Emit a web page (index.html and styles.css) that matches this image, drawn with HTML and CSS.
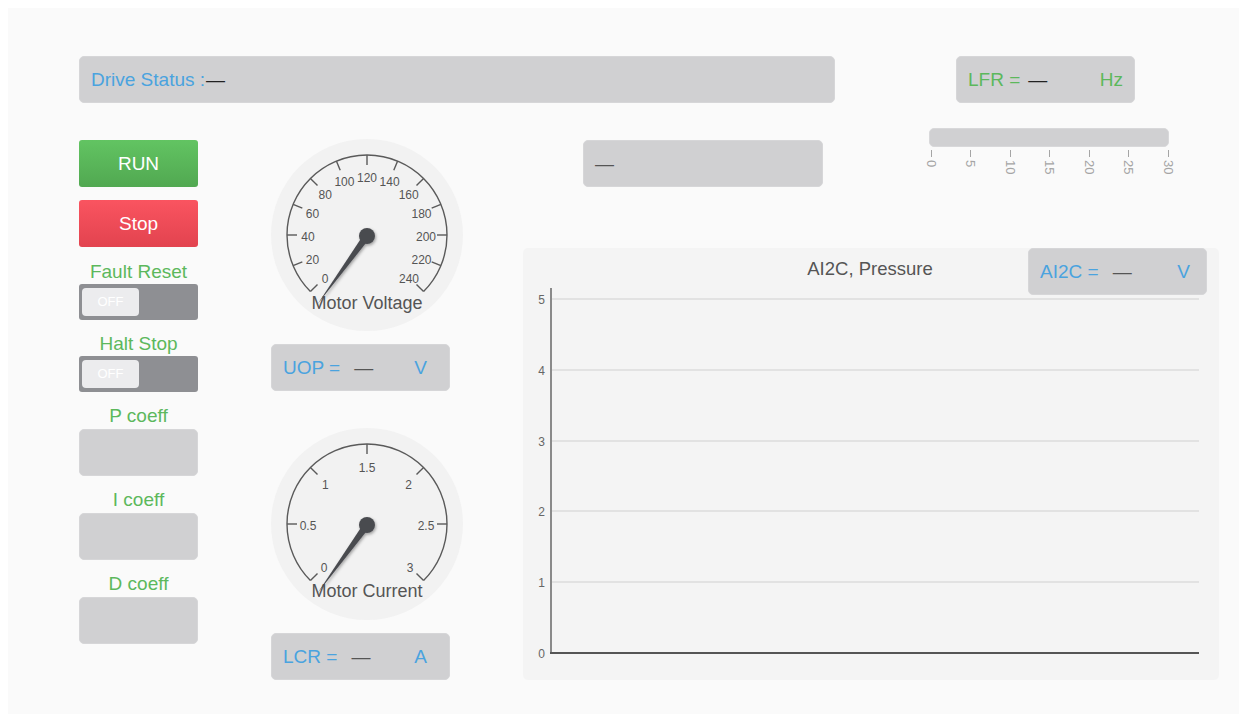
FILE: index.html
```html
<!DOCTYPE html>
<html lang="en">
<head>
<meta charset="utf-8">
<title>Drive Control</title>
<link rel="stylesheet" href="styles.css">
</head>
<body>
<div class="panel">
  <div class="top-row">
    <div class="box status"><span class="blue">Drive Status :</span><span class="dash dark">—</span></div>
    <div class="box readout lfr">
      <span class="green lbl">LFR =</span><span class="dash dark">—</span><span class="green unit">Hz</span>
    </div>
  </div>

  <div class="main">
    <div class="controls">
      <button class="btn run">RUN</button>
      <button class="btn stop">Stop</button>

      <div class="field first">
        <div class="field-label">Fault Reset</div>
        <div class="toggle"><span class="knob">OFF</span></div>
      </div>
      <div class="field">
        <div class="field-label">Halt Stop</div>
        <div class="toggle"><span class="knob">OFF</span></div>
      </div>
      <div class="field">
        <div class="field-label">P coeff</div>
        <div class="box input"></div>
      </div>
      <div class="field">
        <div class="field-label">I coeff</div>
        <div class="box input"></div>
      </div>
      <div class="field">
        <div class="field-label">D coeff</div>
        <div class="box input"></div>
      </div>
    </div>

    <div class="gauges">
      <svg class="gauge" width="192" height="192" viewBox="0 0 192 192">
        <defs>
          <filter id="needle-shadow" x="-50%" y="-50%" width="200%" height="200%">
            <feDropShadow dx="1" dy="1.5" stdDeviation="1.4" flood-color="#000" flood-opacity="0.35"/>
          </filter>
        </defs>
        <circle cx="96" cy="96" r="96" fill="#f2f2f2"/>
        <path d="M39.43 152.57 A80 80 0 1 1 152.57 152.57" fill="none" stroke="#5a5a5a" stroke-width="1.4"/>
        <g stroke="#5a5a5a" stroke-width="1.4">
          <line x1="39.43" y1="152.57" x2="46.5" y2="145.5"/>
          <line x1="22.09" y1="126.62" x2="31.33" y2="122.79"/>
          <line x1="16" y1="96" x2="26" y2="96"/>
          <line x1="22.09" y1="65.38" x2="31.33" y2="69.21"/>
          <line x1="39.43" y1="39.43" x2="46.5" y2="46.5"/>
          <line x1="65.38" y1="22.09" x2="69.21" y2="31.33"/>
          <line x1="96" y1="16" x2="96" y2="26"/>
          <line x1="126.62" y1="22.09" x2="122.79" y2="31.33"/>
          <line x1="152.57" y1="39.43" x2="145.5" y2="46.5"/>
          <line x1="169.91" y1="65.38" x2="160.67" y2="69.21"/>
          <line x1="176" y1="96" x2="166" y2="96"/>
          <line x1="169.91" y1="126.62" x2="160.67" y2="122.79"/>
          <line x1="152.57" y1="152.57" x2="145.5" y2="145.5"/>
        </g>
        <g class="dial-num">
          <text x="54" y="140">0</text>
          <text x="41.5" y="121">20</text>
          <text x="37" y="98">40</text>
          <text x="41.5" y="75">60</text>
          <text x="54.3" y="56">80</text>
          <text x="73.4" y="43">100</text>
          <text x="96" y="38.5">120</text>
          <text x="118.6" y="43">140</text>
          <text x="137.7" y="56">160</text>
          <text x="150.5" y="75">180</text>
          <text x="155" y="98">200</text>
          <text x="150.5" y="121">220</text>
          <text x="138" y="140">240</text>
        </g>
        <text class="gauge-title" x="96" y="164">Motor Voltage</text>
        <g filter="url(#needle-shadow)" fill="#4a4b50">
          <polygon points="92.4,98 99.6,98 96,13" transform="rotate(-144 96 97)"/>
          <circle cx="96" cy="97" r="8"/>
        </g>
      </svg>

      <div class="box readout uop">
        <span class="blue lbl">UOP =</span><span class="dash grey">—</span><span class="blue unit">V</span>
      </div>

      <svg class="gauge gauge-low" width="192" height="192" viewBox="0 0 192 192">
        <circle cx="96" cy="96" r="96" fill="#f2f2f2"/>
        <path d="M39.43 152.57 A80 80 0 1 1 152.57 152.57" fill="none" stroke="#5a5a5a" stroke-width="1.4"/>
        <g stroke="#5a5a5a" stroke-width="1.4">
          <line x1="39.43" y1="152.57" x2="46.5" y2="145.5"/>
          <line x1="16" y1="96" x2="26" y2="96"/>
          <line x1="39.43" y1="39.43" x2="46.5" y2="46.5"/>
          <line x1="96" y1="16" x2="96" y2="26"/>
          <line x1="152.57" y1="39.43" x2="145.5" y2="46.5"/>
          <line x1="176" y1="96" x2="166" y2="96"/>
          <line x1="152.57" y1="152.57" x2="145.5" y2="145.5"/>
        </g>
        <g class="dial-num">
          <text x="53" y="140">0</text>
          <text x="37" y="98">0.5</text>
          <text x="54.3" y="57">1</text>
          <text x="96" y="40">1.5</text>
          <text x="137.7" y="57">2</text>
          <text x="155" y="98">2.5</text>
          <text x="139" y="140">3</text>
        </g>
        <text class="gauge-title" x="96" y="163">Motor Current</text>
        <g filter="url(#needle-shadow)" fill="#4a4b50">
          <polygon points="92.4,98 99.6,98 96,13" transform="rotate(-144 96 97)"/>
          <circle cx="96" cy="97" r="8"/>
        </g>
      </svg>

      <div class="box readout lcr">
        <span class="blue lbl">LCR =</span><span class="dash grey">—</span><span class="blue unit">A</span>
      </div>
    </div>

    <div class="right">
      <div class="right-top">
        <div class="box message"><span class="dash grey">—</span></div>
        <div class="slider">
          <div class="slider-track"></div>
          <div class="scale">
            <div class="mark"><i></i><span>0</span></div>
            <div class="mark"><i></i><span>5</span></div>
            <div class="mark"><i></i><span>10</span></div>
            <div class="mark"><i></i><span>15</span></div>
            <div class="mark"><i></i><span>20</span></div>
            <div class="mark"><i></i><span>25</span></div>
            <div class="mark"><i></i><span>30</span></div>
          </div>
        </div>
      </div>

      <div class="chart">
        <svg width="696" height="432" viewBox="0 0 696 432">
          <text class="chart-title" x="347" y="27">AI2C, Pressure</text>
          <g stroke="#dcdcdc" stroke-width="1.5">
            <line x1="29" y1="51" x2="676" y2="51"/>
            <line x1="29" y1="122" x2="676" y2="122"/>
            <line x1="29" y1="193" x2="676" y2="193"/>
            <line x1="29" y1="263" x2="676" y2="263"/>
            <line x1="29" y1="334" x2="676" y2="334"/>
          </g>
          <line x1="28" y1="40" x2="28" y2="406" stroke="#8a8a8a" stroke-width="2"/>
          <line x1="27" y1="405" x2="676" y2="405" stroke="#555" stroke-width="2"/>
          <g class="axis-num">
            <text x="22" y="56">5</text>
            <text x="22" y="127">4</text>
            <text x="22" y="198">3</text>
            <text x="22" y="268">2</text>
            <text x="22" y="339">1</text>
            <text x="22" y="410">0</text>
          </g>
        </svg>
        <div class="box readout ai2c">
          <span class="blue lbl">AI2C =</span><span class="dash grey">—</span><span class="blue unit">V</span>
        </div>
      </div>
    </div>
  </div>
</div>
</body>
</html>
```

FILE: styles.css
```css
body {
  margin: 8px;
  background: #ffffff;
  font-family: "Liberation Sans", Arial, sans-serif;
}

.panel {
  width: 1231px;
  height: 706px;
  box-sizing: border-box;
  padding: 48px 0 0 71px;
  background: #fafafa;
}

/* shared grey field */
.box {
  box-sizing: border-box;
  background: #d0d0d2;
  border: 1px solid #d6d6d8;
  border-radius: 5px;
}

.blue { color: #4aa3df; }
.green { color: #5cb85c; }
.dark { color: #222; }
.grey { color: #555; }

.top-row {
  display: flex;
  height: 47px;
}

.status {
  width: 756px;
  height: 47px;
  display: flex;
  align-items: center;
  padding-left: 11px;
  font-size: 19px;
}

.status .blue { margin-right: 1px; }

/* label = value unit readouts */
.readout {
  position: relative;
  width: 179px;
  height: 47px;
  display: flex;
  align-items: center;
  font-size: 19px;
}

.readout .lbl {
  margin-left: 11px;
}

.readout .dash {
  margin-left: 14px;
  width: 20px;
}

.readout .unit {
  margin-left: auto;
}

.lfr {
  margin-left: 121px;
}
.lfr .dash { margin-left: 8px; }
.lfr .unit { margin-right: 11px; }

.uop .unit,
.lcr .unit { margin-right: 22px; }

.main {
  display: flex;
  margin-top: 25px;
}

/* left column of controls */
.controls {
  width: 119px;
  padding-top: 12px;
  display: flex;
  flex-direction: column;
}

.btn {
  display: block;
  width: 119px;
  height: 47px;
  border: none;
  border-radius: 3px;
  color: #fff;
  font-family: inherit;
  font-size: 19px;
  padding: 0;
}

.run {
  background: linear-gradient(#62c462, #51a851);
}

.stop {
  margin-top: 13px;
  background: linear-gradient(#fa5460, #e2434f);
}

.field {
  margin-top: 12px;
}

.field.first {
  margin-top: 13px;
}

.field-label {
  height: 24px;
  line-height: 24px;
  text-align: center;
  color: #5cb85c;
  font-size: 19px;
}

.toggle {
  height: 36px;
  box-sizing: border-box;
  padding: 4px 3px;
  background: #8e8f93;
  border-radius: 3px;
}

.knob {
  display: block;
  width: 57px;
  height: 28px;
  line-height: 28px;
  text-align: center;
  background: #ececee;
  border-radius: 4px;
  color: #fff;
  font-size: 13px;
}

.input {
  height: 47px;
  margin-top: 1px;
}

/* gauges */
.gauges {
  width: 192px;
  margin-left: 73px;
  padding-top: 11px;
}

.gauge {
  display: block;
}

.gauge-low {
  margin-top: 37px;
}

.dial-num text {
  font-family: "Liberation Sans", Arial, sans-serif;
  font-size: 12px;
  fill: #555;
  text-anchor: middle;
  dominant-baseline: central;
}

.gauge-title {
  font-family: "Liberation Sans", Arial, sans-serif;
  font-size: 18px;
  fill: #555;
  text-anchor: middle;
  dominant-baseline: central;
}

.uop,
.lcr {
  margin-top: 13px;
}

/* right side */
.right {
  width: 696px;
  margin-left: 60px;
}

.right-top {
  display: flex;
  height: 120px;
}

.message {
  width: 240px;
  height: 47px;
  margin-left: 60px;
  margin-top: 12px;
  display: flex;
  align-items: center;
  padding-left: 11px;
  font-size: 19px;
}

.slider {
  width: 240px;
  margin-left: 106px;
}

.slider-track {
  height: 19px;
  box-sizing: border-box;
  background: #d0d0d2;
  border: 1px solid #d8d8da;
  border-radius: 5px;
}

.scale {
  display: flex;
  justify-content: space-between;
  margin: 3px -5px 0 -4px;
}

.mark {
  width: 12px;
  display: flex;
  flex-direction: column;
  align-items: center;
}

.mark i {
  display: block;
  width: 1px;
  height: 7px;
  background: #a5a5a5;
}

.mark span {
  margin-top: 3px;
  writing-mode: vertical-rl;
  font-size: 13px;
  line-height: 13px;
  color: #a5a5a5;
}

/* pressure chart */
.chart {
  position: relative;
  width: 696px;
  height: 432px;
  background: #f4f4f4;
  border-radius: 5px;
}

.chart svg {
  display: block;
}

.chart-title {
  font-family: "Liberation Sans", Arial, sans-serif;
  font-size: 18.5px;
  fill: #555;
  text-anchor: middle;
}

.axis-num text {
  font-family: "Liberation Sans", Arial, sans-serif;
  font-size: 12px;
  fill: #666;
  text-anchor: end;
}

.ai2c {
  position: absolute;
  top: 0;
  right: 12px;
}

.ai2c .unit { margin-right: 16px; }
```
